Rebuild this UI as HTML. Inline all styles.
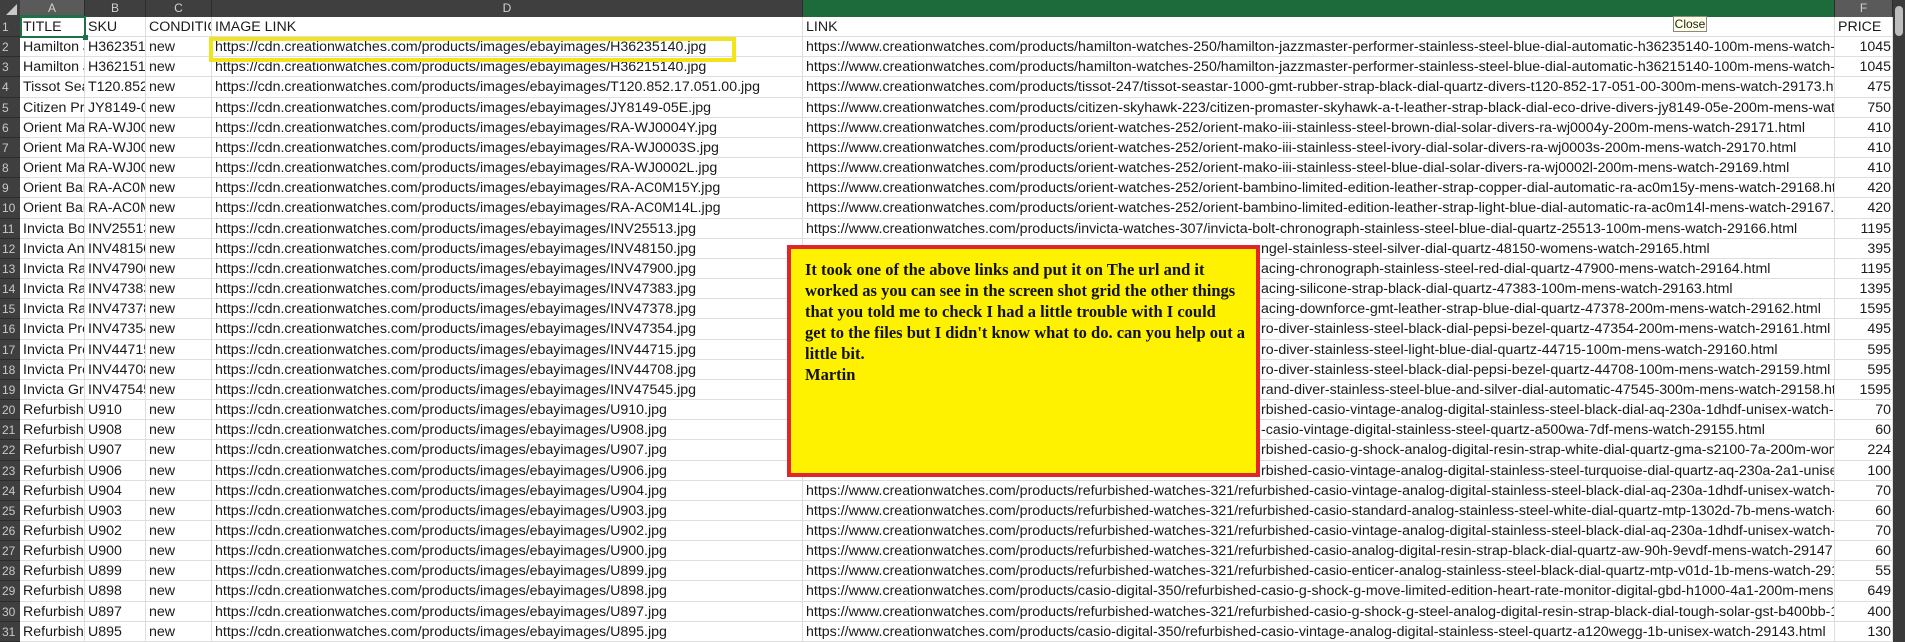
<!DOCTYPE html>
<html><head><meta charset="utf-8">
<style>
*{margin:0;padding:0;box-sizing:border-box}
body{width:1905px;height:642px;overflow:hidden;background:#fff;font-family:"Liberation Sans",sans-serif;position:relative}
.hdr{position:absolute;top:0;left:0;height:17px;width:1905px;background:#3f3f3f}
.hc{position:absolute;top:0;height:17px;color:#d0d0d0;font-size:12px;text-align:center;line-height:17px;border-right:1px solid #2c2c2c}
.rn{position:absolute;left:0;width:20px;background:#3f3f3f;color:#c8c8c8;font-size:12px;line-height:20px;padding-left:2px;border-bottom:1px solid #2c2c2c}
.row{position:absolute;left:20px;height:20.16px;width:1873px;border-bottom:1px solid #dedede}
.c{position:absolute;top:0;height:20px;overflow:hidden;white-space:nowrap;font-size:14.2px;line-height:20px;color:#1a1a1a;padding-left:3px;border-right:1px solid #dedede}
.a{left:0;width:65px}.b{left:65px;width:61px}.cc{left:126px;width:66px}.d{left:192px;width:591px}.e{left:783px;width:1032px}.f{left:1815px;width:58px;text-align:right;padding-right:1px;padding-left:0}
.note{position:absolute;left:787px;top:245px;width:473px;height:232px;background:#fff200;border:4px solid #e0262a;padding:10px 4px 0 14px;font-family:"Liberation Serif",serif;font-weight:bold;font-size:16.5px;line-height:21px;color:#111;white-space:nowrap;overflow:hidden}
</style></head><body>
<div class="hdr"></div>
<div style="position:absolute;left:0;top:0;width:20px;height:17px;background:#3f3f3f"></div>
<div style="position:absolute;left:6px;top:4px;width:0;height:0;border-left:11px solid transparent;border-bottom:11px solid #c8c8c8"></div>
<div class="hc" style="left:20px;width:65px;background:#5a5a5a;border-bottom:2px solid #1e7145">A</div>
<div class="hc" style="left:85px;width:61px">B</div>
<div class="hc" style="left:146px;width:66px">C</div>
<div class="hc" style="left:212px;width:591px">D</div>
<div class="hc" style="left:803px;width:1032px;background:#1d6b3b"></div>
<div class="hc" style="left:1835px;width:58px;background:#5a5a5a">F</div>
<div style="position:absolute;left:1893px;top:0;width:12px;height:642px;background:#3a3a3a"></div>
<div style="position:absolute;left:1895px;top:6px;width:8px;height:30px;background:#bdbdbd;border-radius:4px"></div>

<div id="rows"></div>
<script>
var D=[
["TITLE","SKU","CONDITION","IMAGE LINK","LINK","PRICE",0],
["Hamilton Jazzmaster","H36235140","new","https://cdn.creationwatches.com/products/images/ebayimages/H36235140.jpg","https://www.creationwatches.com/products/hamilton-watches-250/hamilton-jazzmaster-performer-stainless-steel-blue-dial-automatic-h36235140-100m-mens-watch-29175.html","1045"],
["Hamilton Jazzmaster","H36215140","new","https://cdn.creationwatches.com/products/images/ebayimages/H36215140.jpg","https://www.creationwatches.com/products/hamilton-watches-250/hamilton-jazzmaster-performer-stainless-steel-blue-dial-automatic-h36215140-100m-mens-watch-29174.html","1045"],
["Tissot Seastar","T120.852.17.051.00","new","https://cdn.creationwatches.com/products/images/ebayimages/T120.852.17.051.00.jpg","https://www.creationwatches.com/products/tissot-247/tissot-seastar-1000-gmt-rubber-strap-black-dial-quartz-divers-t120-852-17-051-00-300m-mens-watch-29173.html","475"],
["Citizen Promaster","JY8149-05E","new","https://cdn.creationwatches.com/products/images/ebayimages/JY8149-05E.jpg","https://www.creationwatches.com/products/citizen-skyhawk-223/citizen-promaster-skyhawk-a-t-leather-strap-black-dial-eco-drive-divers-jy8149-05e-200m-mens-watch-29172.html","750"],
["Orient Mako","RA-WJ0004Y","new","https://cdn.creationwatches.com/products/images/ebayimages/RA-WJ0004Y.jpg","https://www.creationwatches.com/products/orient-watches-252/orient-mako-iii-stainless-steel-brown-dial-solar-divers-ra-wj0004y-200m-mens-watch-29171.html","410"],
["Orient Mako","RA-WJ0003S","new","https://cdn.creationwatches.com/products/images/ebayimages/RA-WJ0003S.jpg","https://www.creationwatches.com/products/orient-watches-252/orient-mako-iii-stainless-steel-ivory-dial-solar-divers-ra-wj0003s-200m-mens-watch-29170.html","410"],
["Orient Mako","RA-WJ0002L","new","https://cdn.creationwatches.com/products/images/ebayimages/RA-WJ0002L.jpg","https://www.creationwatches.com/products/orient-watches-252/orient-mako-iii-stainless-steel-blue-dial-solar-divers-ra-wj0002l-200m-mens-watch-29169.html","410"],
["Orient Bambino","RA-AC0M15Y","new","https://cdn.creationwatches.com/products/images/ebayimages/RA-AC0M15Y.jpg","https://www.creationwatches.com/products/orient-watches-252/orient-bambino-limited-edition-leather-strap-copper-dial-automatic-ra-ac0m15y-mens-watch-29168.html","420"],
["Orient Bambino","RA-AC0M14L","new","https://cdn.creationwatches.com/products/images/ebayimages/RA-AC0M14L.jpg","https://www.creationwatches.com/products/orient-watches-252/orient-bambino-limited-edition-leather-strap-light-blue-dial-automatic-ra-ac0m14l-mens-watch-29167.html","420"],
["Invicta Bolt","INV25513","new","https://cdn.creationwatches.com/products/images/ebayimages/INV25513.jpg","https://www.creationwatches.com/products/invicta-watches-307/invicta-bolt-chronograph-stainless-steel-blue-dial-quartz-25513-100m-mens-watch-29166.html","1195"],
["Invicta Angel","INV48150","new","https://cdn.creationwatches.com/products/images/ebayimages/INV48150.jpg","ngel-stainless-steel-silver-dial-quartz-48150-womens-watch-29165.html","395",1],
["Invicta Racing","INV47900","new","https://cdn.creationwatches.com/products/images/ebayimages/INV47900.jpg","acing-chronograph-stainless-steel-red-dial-quartz-47900-mens-watch-29164.html","1195",1],
["Invicta Racing","INV47383","new","https://cdn.creationwatches.com/products/images/ebayimages/INV47383.jpg","acing-silicone-strap-black-dial-quartz-47383-100m-mens-watch-29163.html","1395",1],
["Invicta Racing","INV47378","new","https://cdn.creationwatches.com/products/images/ebayimages/INV47378.jpg","acing-downforce-gmt-leather-strap-blue-dial-quartz-47378-200m-mens-watch-29162.html","1595",1],
["Invicta Pro Diver","INV47354","new","https://cdn.creationwatches.com/products/images/ebayimages/INV47354.jpg","ro-diver-stainless-steel-black-dial-pepsi-bezel-quartz-47354-200m-mens-watch-29161.html","495",1],
["Invicta Pro Diver","INV44715","new","https://cdn.creationwatches.com/products/images/ebayimages/INV44715.jpg","ro-diver-stainless-steel-light-blue-dial-quartz-44715-100m-mens-watch-29160.html","595",1],
["Invicta Pro Diver","INV44708","new","https://cdn.creationwatches.com/products/images/ebayimages/INV44708.jpg","ro-diver-stainless-steel-black-dial-pepsi-bezel-quartz-44708-100m-mens-watch-29159.html","595",1],
["Invicta Grand","INV47545","new","https://cdn.creationwatches.com/products/images/ebayimages/INV47545.jpg","rand-diver-stainless-steel-blue-and-silver-dial-automatic-47545-300m-mens-watch-29158.html","1595",1],
["Refurbished","U910","new","https://cdn.creationwatches.com/products/images/ebayimages/U910.jpg","rbished-casio-vintage-analog-digital-stainless-steel-black-dial-aq-230a-1dhdf-unisex-watch-29157.html","70",1],
["Refurbished","U908","new","https://cdn.creationwatches.com/products/images/ebayimages/U908.jpg","-casio-vintage-digital-stainless-steel-quartz-a500wa-7df-mens-watch-29155.html","60",1],
["Refurbished","U907","new","https://cdn.creationwatches.com/products/images/ebayimages/U907.jpg","rbished-casio-g-shock-analog-digital-resin-strap-white-dial-quartz-gma-s2100-7a-200m-womens-watch.html","224",1],
["Refurbished","U906","new","https://cdn.creationwatches.com/products/images/ebayimages/U906.jpg","rbished-casio-vintage-analog-digital-stainless-steel-turquoise-dial-quartz-aq-230a-2a1-unisex-watch.html","100",1],
["Refurbished","U904","new","https://cdn.creationwatches.com/products/images/ebayimages/U904.jpg","https://www.creationwatches.com/products/refurbished-watches-321/refurbished-casio-vintage-analog-digital-stainless-steel-black-dial-aq-230a-1dhdf-unisex-watch-29152.html","70"],
["Refurbished","U903","new","https://cdn.creationwatches.com/products/images/ebayimages/U903.jpg","https://www.creationwatches.com/products/refurbished-watches-321/refurbished-casio-standard-analog-stainless-steel-white-dial-quartz-mtp-1302d-7b-mens-watch-29151.html","60"],
["Refurbished","U902","new","https://cdn.creationwatches.com/products/images/ebayimages/U902.jpg","https://www.creationwatches.com/products/refurbished-watches-321/refurbished-casio-vintage-analog-digital-stainless-steel-black-dial-aq-230a-1dhdf-unisex-watch-29150.html","70"],
["Refurbished","U900","new","https://cdn.creationwatches.com/products/images/ebayimages/U900.jpg","https://www.creationwatches.com/products/refurbished-watches-321/refurbished-casio-analog-digital-resin-strap-black-dial-quartz-aw-90h-9evdf-mens-watch-29147.html","60"],
["Refurbished","U899","new","https://cdn.creationwatches.com/products/images/ebayimages/U899.jpg","https://www.creationwatches.com/products/refurbished-watches-321/refurbished-casio-enticer-analog-stainless-steel-black-dial-quartz-mtp-v01d-1b-mens-watch-29146.html","55"],
["Refurbished","U898","new","https://cdn.creationwatches.com/products/images/ebayimages/U898.jpg","https://www.creationwatches.com/products/casio-digital-350/refurbished-casio-g-shock-g-move-limited-edition-heart-rate-monitor-digital-gbd-h1000-4a1-200m-mens-watch.html","649"],
["Refurbished","U897","new","https://cdn.creationwatches.com/products/images/ebayimages/U897.jpg","https://www.creationwatches.com/products/refurbished-watches-321/refurbished-casio-g-shock-g-steel-analog-digital-resin-strap-black-dial-tough-solar-gst-b400bb-1a-mens-watch.html","400"],
["Refurbished","U895","new","https://cdn.creationwatches.com/products/images/ebayimages/U895.jpg","https://www.creationwatches.com/products/casio-digital-350/refurbished-casio-vintage-analog-digital-stainless-steel-quartz-a120wegg-1b-unisex-watch-29143.html","130"]
];
var h="";
for(var i=0;i<D.length;i++){
 var t=17+i*20.16,r=D[i];
 h+='<div class="rn" style="top:'+t+'px;height:20.16px">'+(i+1)+'</div>';
 h+='<div class="row" style="top:'+t+'px">';
 h+='<div class="c a">'+r[0]+'</div><div class="c b">'+r[1]+'</div><div class="c cc">'+r[2]+'</div>';
 h+='<div class="c d">'+r[3]+'</div>';
 h+='<div class="c e"'+(r[6]===1?' style="padding-left:458px"':'')+'>'+r[4]+'</div>';
 h+='<div class="c f"'+(i==0?' style="text-align:left;padding-left:3px"':'')+'>'+r[5]+'</div></div>';
}
document.getElementById("rows").innerHTML=h;
</script>
<div style="position:absolute;left:20px;top:16px;width:66px;height:22px;border:2px solid #1e7145"></div>
<div style="position:absolute;left:83px;top:35px;width:5px;height:5px;background:#1e7145"></div>
<div style="position:absolute;left:209px;top:37px;width:527px;height:25px;border:4px solid #f2e41a"></div>
<div style="position:absolute;left:1673px;top:16px;width:34px;height:16px;background:#ffffe6;border:1px solid #888;font-size:12px;line-height:14px;text-align:center;color:#222">Close</div>
<div class="note">It took one of the above links and put it on The url and it<br>worked as you can see in the screen shot grid the other things<br>that you told me to check I had a little trouble with I could<br>get to the files but I didn't know what to do. can you help out a<br>little bit.<br>Martin</div>
</body></html>
